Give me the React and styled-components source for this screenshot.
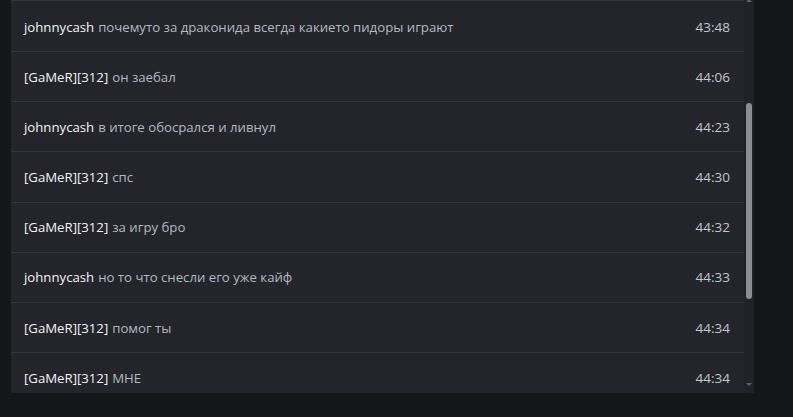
import React from "react";
import styled, { createGlobalStyle } from "styled-components";

const Global = createGlobalStyle`
  html, body { margin: 0; padding: 0; background: #151619; }
  body { font-family: "Open Sans", "Noto Sans", sans-serif; }
`;

const Page = styled.div`
  width: 793px;
  height: 417px;
  background: #151619;
  padding-left: 11px;
  box-sizing: border-box;
  overflow: hidden;
`;

const Panel = styled.div`
  display: flex;
  width: 743px;
  height: 393px;
  background: #23252b;
`;

const List = styled.div`
  flex: 1;
  overflow: hidden;
  border-top: 1px solid #34363d;
  padding-top: 1px;
`;

const Row = styled.div`
  display: flex;
  align-items: center;
  justify-content: space-between;
  height: 49.17px;
  padding: 0 14px 0 13px;
  border-bottom: 1px solid #34363d;
  font-size: 13.2px;
`;

const Text = styled.div`
  color: #b4b8c0;
  white-space: nowrap;
`;

const Name = styled.span`
  color: #f2f3f5;
  margin-right: 4px;
`;

const Time = styled.div`
  color: #c2c6ce;
  font-size: 13.5px;
`;

const Track = styled.div`
  width: 10px;
  background: #202227;
  display: flex;
  flex-direction: column;
  align-items: center;
`;

const Arrow = styled.div`
  width: 0;
  height: 0;
  border-left: 3px solid transparent;
  border-right: 3px solid transparent;
  ${(p) => (p.$up ? "border-bottom: 3px solid #5d6068; margin-top: -1px;" : "border-top: 3px solid #5d6068;")}
`;

const Thumb = styled.div`
  width: 6px;
  height: 196px;
  margin-top: 101px;
  border-radius: 3px;
  background: #8b8d92;
`;

const Spacer = styled.div`
  flex: 1;
`;

const BottomGap = styled.div`
  height: 7px;
`;

const messages = [
  ["johnnycash", "почемуто за драконида всегда какието пидоры играют", "43:48"],
  ["[GaMeR][312]", "он заебал", "44:06"],
  ["johnnycash", "в итоге обосрался и ливнул", "44:23"],
  ["[GaMeR][312]", "спс", "44:30"],
  ["[GaMeR][312]", "за игру бро", "44:32"],
  ["johnnycash", "но то что снесли его уже кайф", "44:33"],
  ["[GaMeR][312]", "помог ты", "44:34"],
  ["[GaMeR][312]", "МНЕ", "44:34"],
];

export default function App() {
  return (
    <Page>
      <Global />
      <Panel>
        <List>
          {messages.map(([n, m, t], i) => (
            <Row key={i}>
              <Text>
                <Name>{n}</Name>
                {m}
              </Text>
              <Time>{t}</Time>
            </Row>
          ))}
        </List>
        <Track>
          <Arrow $up />
          <Thumb />
          <Spacer />
          <Arrow />
          <BottomGap />
        </Track>
      </Panel>
    </Page>
  );
}
